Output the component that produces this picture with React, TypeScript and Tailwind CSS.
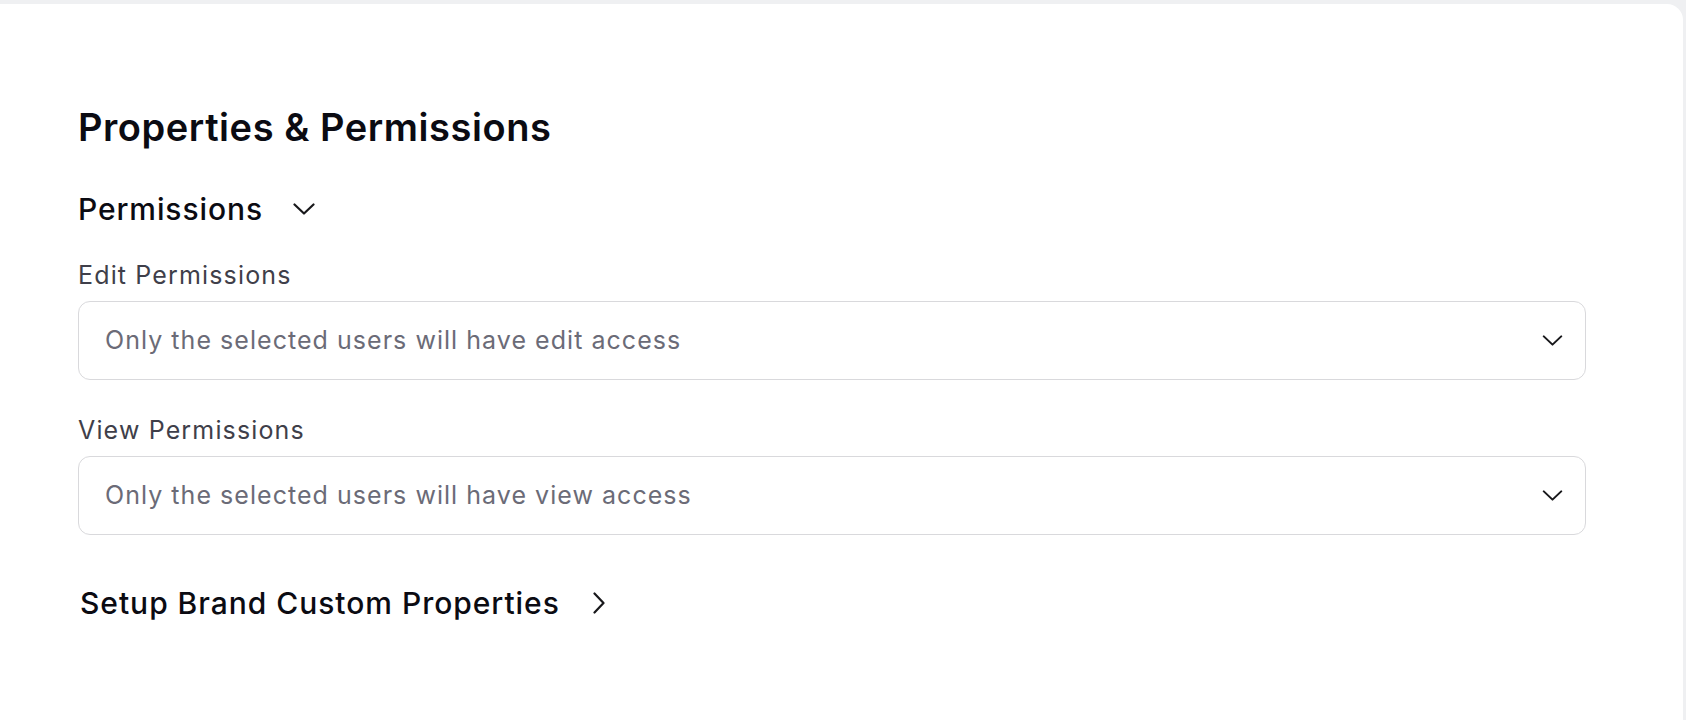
function ChevronDown({ className }: { className?: string }) {
  return (
    <svg className={className} viewBox="0 0 22 12" fill="none" stroke="currentColor" strokeWidth="2.2" strokeLinecap="round" strokeLinejoin="round">
      <polyline points="1.5 1.5 11 10.5 20.5 1.5" />
    </svg>
  );
}

function ChevronRight({ className }: { className?: string }) {
  return (
    <svg className={className} viewBox="0 0 12 22" fill="none" stroke="currentColor" strokeWidth="2.2" strokeLinecap="round" strokeLinejoin="round">
      <polyline points="1.5 1.5 10.5 11 1.5 20.5" />
    </svg>
  );
}

function PermissionSelect({ label, value }: { label: string; value: string }) {
  return (
    <div className="flex flex-col">
      <label className="text-[25px] leading-[32px] tracking-[1.15px] text-[#3f3f4a]">{label}</label>
      <button className="mt-[10px] flex h-[79px] w-[1508px] items-center justify-between rounded-[12px] border border-[#d9d9dc] bg-white pl-[26px] pr-[22px] text-left">
        <span className="text-[25px] tracking-[1.04px] text-[#6b6b77]">{value}</span>
        <ChevronDown className="h-[11px] w-[21px] text-[#18181b]" />
      </button>
    </div>
  );
}

export default function App() {
  return (
    <div className="min-h-[720px] bg-[#eff0f2] pt-[4px] pr-[3px]" style={{ fontFamily: "Inter, 'Noto Sans', sans-serif" }}>
      <div className="min-h-[716px] rounded-tr-[16px] bg-white pl-[78px] pt-[100px] pb-[40px]">
        <h1 className="text-[38px] font-semibold leading-[46px] tracking-[0.55px] text-[#0b0b12]">
          Properties &amp; Permissions
        </h1>

        <div className="mt-[41px] flex items-center gap-[30px]">
          <h2 className="text-[30px] font-medium leading-[36px] tracking-[0.9px] text-[#0b0b12]">Permissions</h2>
          <ChevronDown className="h-[12px] w-[22px] text-[#18181b]" />
        </div>

        <div className="mt-[32px] flex flex-col gap-[34px]">
          <PermissionSelect label="Edit Permissions" value="Only the selected users will have edit access" />
          <PermissionSelect label="View Permissions" value="Only the selected users will have view access" />
        </div>

        <div className="mt-[50px] flex items-center gap-[33px] pl-[2px]">
          <h2 className="text-[30px] font-medium leading-[36px] tracking-[0.97px] text-[#0b0b12]">Setup Brand Custom Properties</h2>
          <ChevronRight className="h-[22px] w-[12px] text-[#18181b]" />
        </div>
      </div>
    </div>
  );
}
